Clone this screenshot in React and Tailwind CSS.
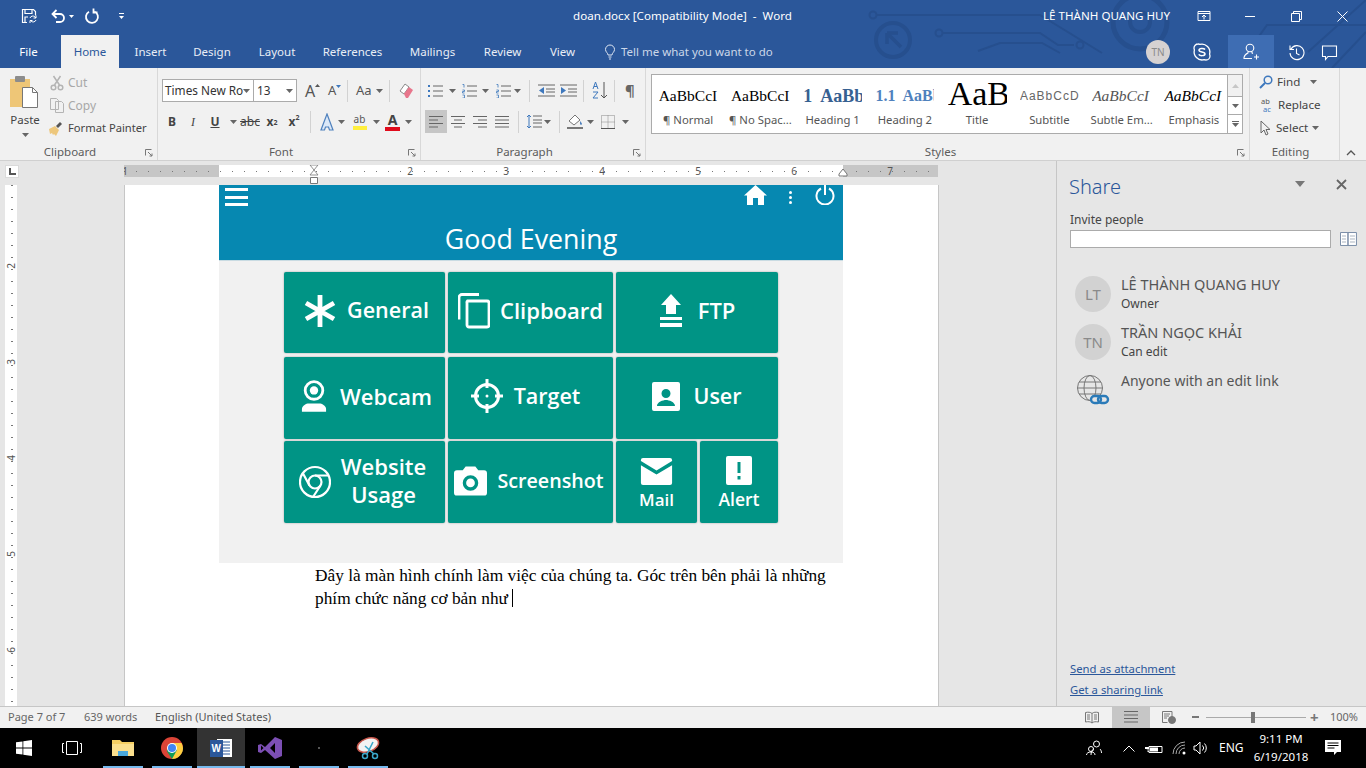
import React from 'react';

// ---- small helpers ----
function Dd({ className = '' }) {
  return (
    <svg width="7" height="4" viewBox="0 0 7 4" className={`shrink-0 ${className}`}>
      <path d="M0 0h7L3.500 4z" fill="#666" />
    </svg>
  );
}

function Sep({ className = '' }) {
  return <div className={`w-px h-[22px] bg-[#d2d2d2] shrink-0 ${className}`} />;
}

function Lines({ rows, stroke = '#666' }) {
  return (
    <svg width="14" height="14" viewBox="0 0 14 14">
      {rows.map((r, i) => (
        <path key={i} d={`M${r[0]} ${1.5 + i * 3.5}H${r[1]}`} stroke={stroke} strokeWidth="1" />
      ))}
    </svg>
  );
}

function Group({ label, className, labelClass = '', launcher = true, children }) {
  return (
    <div className={`flex flex-col h-full border-r border-[#d8d8d8] shrink-0 ${className}`}>
      <div className="h-[76px] shrink-0">{children}</div>
      <div className={`relative flex-1 text-center text-[11.500px] leading-[16px] text-[#5c5c5c] ${labelClass}`}>
        {label}
        {launcher && (
          <svg width="8" height="8" viewBox="0 0 8 8" className="absolute right-[4px] top-[5px]">
            <path d="M.5 .5h6M.5 .5v6M3 3l4 4M7 4.500V7H4.500" stroke="#777" fill="none" />
          </svg>
        )}
      </div>
    </div>
  );
}

// ---- title bar ----
function CircuitArt() {
  return (
    <svg width="506" height="68" viewBox="0 0 506 68" className="absolute right-0 top-0" fill="none" stroke="#264f8e" strokeWidth="2">
      <circle cx="13" cy="15" r="3.500" />
      <path d="M17 15H180l62 38" />
      <circle cx="33" cy="40" r="17" strokeWidth="4" />
      <path d="M27 33v11M27 33h11M28 34l13 13" strokeWidth="3.500" />
      <circle cx="79" cy="33" r="3.500" />
      <path d="M83 33H180l18 12h16" />
      <circle cx="220" cy="45" r="3.500" />
      <path d="M118 51l22-8h42l18 10" />
      <circle cx="280" cy="22" r="27" strokeWidth="5" />
      <circle cx="280" cy="22" r="10" strokeWidth="4" />
      <path d="M395 42l12-17H506M448 52L506 0M472 68l34-36" />
    </svg>
  );
}

function TitleBar() {
  return (
    <div className="flex items-center h-[36px] pb-[4px] relative text-white text-[11.600px]">
      <div className="flex items-center w-[573px] shrink-0 h-full relative">
        <div className="ml-[21px] shrink-0 flex">
          <svg width="16" height="16" viewBox="0 0 16 16" fill="none" stroke="#fff" strokeWidth="1.200">
            <path d="M6 14.500H1.500v-13h11l2 2v4M4 1.500v4h7v-4M4 14V9h3" />
            <path d="M9 10a3 3 0 0 1 5-1l1 1M15 12a3 3 0 0 1-5 1l-1-1M15 7.500V10h-2.500M9 15v-2.500h2.500" strokeWidth="1" />
          </svg>
        </div>
        <div className="ml-[13px] shrink-0 flex items-center gap-[3px]">
          <svg width="16" height="16" viewBox="0 0 16 16" fill="none" stroke="#fff" strokeWidth="1.800">
            <path d="M3 6h7a4 4 0 0 1 0 8H6M6.500 2l-4 4 4 4" />
          </svg>
          <svg width="5" height="3" viewBox="0 0 5 3"><path d="M0 0h5L2.500 3z" fill="#fff" /></svg>
        </div>
        <div className="ml-[10px] shrink-0 flex">
          <svg width="16" height="16" viewBox="0 0 16 16" fill="none" stroke="#fff" strokeWidth="1.800">
            <path d="M10.500 3.500a6 6 0 1 1-5.500.2M9.500 .5v4h4" />
          </svg>
        </div>
        <div className="ml-[19px] flex flex-col items-center gap-[2px]">
          <div className="w-[5px] h-px bg-white" />
          <svg width="5" height="3" viewBox="0 0 5 3"><path d="M0 0h5L2.500 3z" fill="#fff" /></svg>
        </div>
      </div>
      <div className="w-[470px] shrink-0 whitespace-pre relative">doan.docx [Compatibility Mode]  -  Word</div>
      <div className="w-[154px] shrink-0 whitespace-nowrap relative">LÊ THÀNH QUANG HUY</div>
      <div className="w-[48px] flex justify-start relative">
        <svg width="14" height="14" viewBox="0 0 14 14" fill="none" stroke="#fff">
          <path d="M1 2.500h12v9H1zM1 4.500h12M7 10.500v-4M5 8l2-2 2 2" />
        </svg>
      </div>
      <div className="w-[46px] flex relative"><div className="w-[10px] h-px bg-white" /></div>
      <div className="w-[46px] flex relative">
        <svg width="11" height="11" viewBox="0 0 11 11" fill="none" stroke="#fff">
          <path d="M.5 2.500h8v8h-8zM2.500 2.500v-2h8v8h-2" />
        </svg>
      </div>
      <div className="relative flex">
        <svg width="11" height="11" viewBox="0 0 11 11" stroke="#fff"><path d="M.5 .5l10 10M10.500 .5l-10 10" /></svg>
      </div>
    </div>
  );
}

function TabsRow() {
  const tabs = [
    ['Insert', 'w-[63px]'],
    ['Design', 'w-[60px]'],
    ['Layout', 'w-[70px]'],
    ['References', 'w-[81px]'],
    ['Mailings', 'w-[79px]'],
    ['Review', 'w-[61px]'],
    ['View', 'w-[59px]'],
  ];
  return (
    <div className="flex items-center h-[32px] relative text-white text-[11.500px]">
      <div className="w-[61px] text-center pr-[4px]">File</div>
      <div className="w-[58px] h-[33px] -mt-px bg-[#f1f1f1] text-[#2b579a] flex items-center justify-center">Home</div>
      {tabs.map(([t, w]) => (
        <div key={t} className={`${w} text-center text-[#e9eef6]`}>{t}</div>
      ))}
      <svg width="12" height="16" viewBox="0 0 12 16" fill="none" stroke="#dfe7f3" className="ml-[12px] shrink-0">
        <path d="M4 11c0-2-2.500-3-2.500-5.500a4.500 4.500 0 0 1 9 0C10.500 8 8 9 8 11zM4.500 13h3M5 15h2" />
      </svg>
      <div className="ml-[5px] text-[#cbd7e9] w-[525px] shrink-0 whitespace-nowrap">Tell me what you want to do</div>
      <div className="w-[24px] h-[24px] rounded-full bg-[#d6d2d2] text-[#8a8a8a] text-[10px] flex items-center justify-center shrink-0">TN</div>
      <div className="ml-[22px] w-[36px] shrink-0 flex">
        <svg width="20" height="20" viewBox="0 0 20 20" fill="none" stroke="#fff" strokeWidth="1.300">
          <path d="M6 2a4 4 0 0 0-4 4c0 .7.2 1.300.4 1.900a8 8 0 0 0 9.700 9.800c.6.200 1.200.3 1.900.3a4 4 0 0 0 4-4c0-.7-.2-1.300-.4-1.900A8 8 0 0 0 7.900 2.400 4 4 0 0 0 6 2z" />
          <path d="M13 7.500C12 6 7 6 7 8.200 7 10.500 13 9.500 13 12c0 2-5 2.200-6.300.4" strokeWidth="1.500" />
        </svg>
      </div>
      <div className="w-[46px] h-[33px] -mt-px bg-[#3e6db3] flex items-center justify-center shrink-0">
        <svg width="18" height="18" viewBox="0 0 18 18" fill="none" stroke="#fff" strokeWidth="1.100">
          <circle cx="8" cy="5" r="3.800" />
          <path d="M6 8.500v1.500c-2 .8-3.500 2-4 4.500v1h8M10 8.500V10l1 .5M12 14h5M14.500 11.500v5" />
        </svg>
      </div>
      <div className="ml-[14px] w-[33px] shrink-0 flex">
        <svg width="17" height="17" viewBox="0 0 17 17" fill="none" stroke="#fff" strokeWidth="1.100">
          <path d="M3 5a7 7 0 1 1-1 4M2 1.500v4h4M8.500 4.500v5l3 1.500" />
        </svg>
      </div>
      <div className="shrink-0 flex">
        <svg width="17" height="17" viewBox="0 0 17 17" fill="none" stroke="#fff" strokeWidth="1.100">
          <path d="M1.500 2h14v10.500H7l-2.500 3v-3h-3z" />
        </svg>
      </div>
    </div>
  );
}

// ---- ribbon ----
function ClipboardGroup() {
  return (
    <Group label="Clipboard" className="w-[158px]" labelClass="pr-[17px]">
      <div className="flex h-full">
        <div className="w-[50px] flex flex-col items-center pt-[7px] text-[11.500px] text-[#444] shrink-0">
          <svg width="32" height="36" viewBox="0 0 32 36">
            <rect x="1" y="4" width="20" height="28" fill="#eec677" />
            <rect x="6" y="1" width="10" height="6" rx="1" fill="#8c8c8c" />
            <path d="M13.500 12.500h10l5 5v15h-15z" fill="#fff" stroke="#777" />
            <path d="M23.500 12.500v5h5" fill="none" stroke="#777" />
          </svg>
          <div className="mt-[1px] leading-[16px]">Paste</div>
          <Dd className="mt-[5px]" />
        </div>
        <div className="flex flex-col pt-[3px] text-[12px] text-[#444]">
          <div className="flex items-center h-[23px] gap-[4px] text-[#a8a8a8]">
            <svg width="14" height="16" viewBox="0 0 14 16" fill="none" stroke="#b4b4b4" strokeWidth="1.500">
              <path d="M3.500 1l6 9M10.500 1l-6 9" />
              <circle cx="3.500" cy="12.500" r="2.300" />
              <circle cx="10.500" cy="12.500" r="2.300" />
            </svg>
            Cut
          </div>
          <div className="flex items-center h-[23px] gap-[4px] text-[#a8a8a8]">
            <svg width="14" height="15" viewBox="0 0 14 15" fill="none" stroke="#b4b4b4">
              <path d="M.5 .5h6l2 2v9h-8zM5.500 3.500h6l2 2v9h-8z" />
            </svg>
            Copy
          </div>
          <div className="flex items-center h-[23px] gap-[5px] -ml-[2px] whitespace-nowrap text-[11.200px]">
            <svg width="15" height="15" viewBox="0 0 15 15">
              <path d="M1 8l6-3 4 4-3 6-2-2-1 1-1-2-2 1z" fill="#edc77c" />
              <path d="M8 5l4-4 2 2-4 4z" fill="#555" />
            </svg>
            Format Painter
          </div>
        </div>
      </div>
    </Group>
  );
}

function FontGroup() {
  const letter = 'flex items-center justify-center text-[#444] text-[12px] shrink-0';
  return (
    <Group label="Font" className="w-[263px]" labelClass="pr-[16px]">
      <div className="flex flex-col pl-[4px] pt-[11px]">
        <div className="flex items-center h-[23px]">
          <div className="w-[92px] h-[23px] shrink-0 bg-white border border-[#ababab] flex items-center justify-between pl-[2px] pr-[4px] text-[11.800px] text-[#333]">
            <span className="whitespace-nowrap">Times New Ro</span>
            <Dd />
          </div>
          <div className="w-[43px] h-[23px] shrink-0 bg-white border border-l-0 border-[#ababab] flex items-center justify-between pl-[3px] pr-[3px] text-[11.800px] text-[#333]">
            13
            <Dd />
          </div>
          <div className="w-[21px] shrink-0 ml-[8px] flex items-start text-[16px] text-[#555] leading-none">
            A
            <svg width="5" height="3" viewBox="0 0 5 3" className="mt-[1px]"><path d="M2.500 0L5 3H0z" fill="#555" /></svg>
          </div>
          <div className="w-[17px] shrink-0 ml-[2px] flex items-start text-[13px] text-[#555] leading-none">
            A
            <svg width="5" height="3" viewBox="0 0 5 3" className="mt-[1px]"><path d="M0 0h5L2.500 3z" fill="#3e78bd" /></svg>
          </div>
          <Sep className="ml-[2px]" />
          <div className="w-[33px] shrink-0 ml-[8px] flex items-center gap-[4px] text-[13px] text-[#555]">Aa<Dd /></div>
          <Sep />
          <div className="ml-[7px]">
            <svg width="18" height="18" viewBox="0 0 18 18">
              <path d="M3 9l5-7 4 3-5 7z" fill="#fff" stroke="#8a8a8a" />
              <path d="M7 12l5-7 4 3-5 8H9z" fill="#e8768c" />
            </svg>
          </div>
        </div>
        <div className="flex items-center h-[23px] mt-[8px]">
          <div className={`${letter} w-[20px] font-bold`}>B</div>
          <div className={`${letter} w-[22px] italic font-['Liberation_Serif',serif]`}>I</div>
          <div className={`${letter} w-[22px] underline font-bold`}>U</div>
          <Dd className="ml-[4px]" />
          <div className={`${letter} w-[24px] ml-[1px] text-[11px] line-through`}>abc</div>
          <div className={`${letter} w-[20px] font-bold`}>x<sub className="text-[7px]">2</sub></div>
          <div className={`${letter} w-[24px] font-bold`}>x<sup className="text-[7px]">2</sup></div>
          <Sep className="ml-[4px]" />
          <div className="ml-[9px] flex shrink-0">
            <svg width="14" height="18" viewBox="0 0 14 18">
              <path d="M7 1l6 16h-3.500l-1-3h-3l-1 3H1z" fill="#dbe8f8" stroke="#4f81bd" strokeWidth="1.200" />
            </svg>
          </div>
          <Dd className="ml-[4px]" />
          <div className="ml-[6px] w-[17px] h-[20px] shrink-0 flex flex-col items-center">
            <div className="text-[10px] leading-[14px] text-[#555]">ab</div>
            <div className="w-[14px] h-[4px] bg-[#ffef3e]" />
          </div>
          <Dd className="ml-[5px]" />
          <div className="ml-[5px] w-[15px] shrink-0 flex flex-col items-center font-bold text-[14px] leading-[14px] text-[#444]">
            A
            <div className="w-[15px] h-[4px] bg-[#e00b1c]" />
          </div>
          <Dd className="ml-[5px]" />
        </div>
      </div>
    </Group>
  );
}

function ParagraphGroup() {
  const bullets = (
    <svg width="15" height="14" viewBox="0 0 15 14" className="shrink-0">
      <path d="M5 2h10M5 7h10M5 12h10" stroke="#666" />
      <path d="M0 1h2v2H0zM0 6h2v2H0zM0 11h2v2H0z" fill="#3e78bd" />
    </svg>
  );
  const numbers = (
    <svg width="15" height="14" viewBox="0 0 15 14" className="shrink-0">
      <path d="M5 2h10M5 7h10M5 12h10" stroke="#666" />
      <path d="M.5 .5H2v3M.5 6h2v1.500h-2V9h2M.5 11h2v3h-2" stroke="#3e78bd" fill="none" strokeWidth=".8" />
    </svg>
  );
  return (
    <Group label="Paragraph" className="w-[225px]" labelClass="pr-[17px]">
      <div className="flex flex-col pt-[11px] pl-[3px]">
        <div className="flex items-center h-[23px] pl-[4px]">
          {bullets}
          <Dd className="ml-[6px]" />
          <div className="ml-[6px] flex">{numbers}</div>
          <Dd className="ml-[5px]" />
          <div className="ml-[7px] flex">{numbers}</div>
          <Dd className="ml-[3px]" />
          <Sep className="ml-[8px]" />
          <div className="ml-[8px] flex gap-[5px]">
            <svg width="17" height="13" viewBox="0 0 17 13"><path d="M0 1h17M8 5h9M8 8h9M0 12h17" stroke="#666" /><path d="M6 3v7L1 6.500z" fill="#3e78bd" /></svg>
            <svg width="17" height="13" viewBox="0 0 17 13"><path d="M0 1h17M8 5h9M8 8h9M0 12h17" stroke="#666" /><path d="M1 3v7l5-3.500z" fill="#3e78bd" /></svg>
          </div>
          <Sep className="ml-[6px]" />
          <div className="ml-[8px] flex">
            <svg width="16" height="19" viewBox="0 0 16 19">
              <path d="M1 8l2.500-7L6 8M2 5.500h3M1 11h5l-5 6h5" stroke="#3e78bd" fill="none" />
              <path d="M12 1v16M9 14l3 3 3-3" stroke="#555" fill="none" />
            </svg>
          </div>
          <Sep className="ml-[6px]" />
          <div className="ml-[10px] text-[15px] text-[#666] font-bold leading-none">¶</div>
        </div>
        <div className="flex items-center h-[23px] mt-[8px] pl-[1px]">
          <div className="w-[22px] h-[23px] bg-[#c6c6c6] flex items-center justify-center shrink-0">
            <Lines rows={[[0, 14], [0, 9], [0, 14], [0, 9]]} />
          </div>
          <div className="w-[22px] flex justify-center shrink-0"><Lines rows={[[0, 14], [3, 11], [0, 14], [3, 11]]} /></div>
          <div className="w-[22px] flex justify-center shrink-0"><Lines rows={[[0, 14], [5, 14], [0, 14], [5, 14]]} /></div>
          <div className="w-[22px] flex justify-center shrink-0"><Lines rows={[[0, 14], [0, 14], [0, 14], [0, 14]]} /></div>
          <Sep className="ml-[5px]" />
          <div className="ml-[7px] flex">
            <svg width="16" height="15" viewBox="0 0 16 15"><path d="M7 2h9M7 6h9M7 9h9M7 13h9" stroke="#666" /><path d="M3 1v13M1 3l2-2 2 2M1 12l2 2 2-2" stroke="#3e78bd" fill="none" /></svg>
          </div>
          <Dd className="ml-[2px]" />
          <Sep className="ml-[8px]" />
          <div className="ml-[6px] flex">
            <svg width="18" height="17" viewBox="0 0 18 17"><path d="M3 8l6-6 5 5-6 5z" fill="#fff" stroke="#777" /><path d="M14 8s2 2 2 3-2 1-2 0 0-3 0-3z" fill="#4f81bd" /><path d="M1 15h16" stroke="#777" strokeWidth="2" /></svg>
          </div>
          <Dd className="ml-[3px]" />
          <div className="ml-[7px] flex">
            <svg width="14" height="14" viewBox="0 0 14 14"><path d="M.5 .5h13v13H.500zM7 .5v13M.5 7h13" stroke="#888" strokeDasharray="1 1" fill="none" /><path d="M0 13.500h14" stroke="#555" /></svg>
          </div>
          <Dd className="ml-[7px]" />
        </div>
      </div>
    </Group>
  );
}

function StyleItem({ preview, previewClass, label }) {
  return (
    <div className="w-[72.250px] shrink-0 flex flex-col items-center overflow-hidden">
      <div className={`h-[34px] w-[59px] overflow-hidden flex items-center whitespace-pre ${previewClass}`}>{preview}</div>
      <div className="text-[11.300px] leading-[16px] -mt-px text-[#555] whitespace-nowrap">{label}</div>
    </div>
  );
}

function StylesGroup() {
  return (
    <Group label="Styles" className="w-[604px]" labelClass="pr-[14px]">
      <div className="pl-[5px] pt-[6px] pr-[6px]">
        <div className="h-[60px] bg-white border border-[#ababab] flex">
          <div className="flex flex-1 pt-[4px] overflow-hidden">
            <StyleItem preview="AaBbCcI" previewClass="font-['Liberation_Serif',serif] text-[15.500px] text-black" label="¶ Normal" />
            <StyleItem preview="AaBbCcI" previewClass="font-['Liberation_Serif',serif] text-[15.500px] text-black" label="¶ No Spac..." />
            <StyleItem preview="1  AaBb" previewClass="font-['Liberation_Serif',serif] font-bold text-[18px] text-[#366091]" label="Heading 1" />
            <StyleItem preview="1.1  AaBb" previewClass="font-['Liberation_Serif',serif] font-bold text-[16px] text-[#4f81bd]" label="Heading 2" />
            <StyleItem preview="AaB" previewClass="font-['Liberation_Serif',serif] text-[34px] leading-[30px] pb-[4px] text-black" label="Title" />
            <StyleItem preview="AaBbCcD" previewClass="font-['Liberation_Sans',sans-serif] text-[12px] tracking-[1px] text-[#666]" label="Subtitle" />
            <StyleItem preview="AaBbCcI" previewClass="font-['Liberation_Serif',serif] italic text-[15.500px] text-[#555]" label="Subtle Em..." />
            <StyleItem preview="AaBbCcI" previewClass="font-['Liberation_Serif',serif] italic text-[15.500px] text-black" label="Emphasis" />
          </div>
          <div className="w-[15px] shrink-0 border-l border-[#ababab] flex flex-col">
            <div className="h-[21px] bg-[#f1f1f1] flex items-center justify-center"><svg width="7" height="4" viewBox="0 0 7 4"><path d="M3.500 0L7 4H0z" fill="#c6c6c6" /></svg></div>
            <div className="h-[19px] border-y border-[#ababab] flex items-center justify-center"><Dd /></div>
            <div className="flex-1 flex flex-col items-center justify-center gap-[1px]"><div className="w-[7px] h-px bg-[#666]" /><Dd /></div>
          </div>
        </div>
      </div>
    </Group>
  );
}

function EditingGroup() {
  return (
    <Group label="Editing" launcher={false} className="w-[90px]" labelClass="pr-[8px]">
      <div className="flex flex-col pt-[2px] pl-[9px] text-[11.600px] text-[#444]">
        <div className="flex items-center h-[23px] gap-[4px]">
          <svg width="14" height="14" viewBox="0 0 14 14" fill="none" stroke="#3e78bd" strokeWidth="1.500"><circle cx="9" cy="5" r="3.800" /><path d="M6 8l-5 5" strokeWidth="2" /></svg>
          Find
          <Dd className="ml-[6px]" />
        </div>
        <div className="flex items-center h-[23px] gap-[3px]">
          <svg width="16" height="16" viewBox="0 0 16 16">
            <text x="2" y="7" fontSize="7.500" fill="#555">ab</text>
            <text x="4" y="15" fontSize="7.500" fill="#3e78bd">ac</text>
          </svg>
          Replace
        </div>
        <div className="flex items-center h-[23px] gap-[5px] pl-[1px]">
          <svg width="11" height="16" viewBox="0 0 11 16" fill="none" stroke="#666"><path d="M1 1v12l3-3 2 5 2-1-2-4.500h4z" /></svg>
          Select
          <Dd className="-ml-[1px]" />
        </div>
      </div>
    </Group>
  );
}

function Ribbon() {
  return (
    <div className="h-[93px] bg-[#f1f1f1] border-b border-[#d0d0d0] flex items-stretch shrink-0">
      <ClipboardGroup />
      <FontGroup />
      <ParagraphGroup />
      <StylesGroup />
      <EditingGroup />
      <div className="flex-1 relative">
        <svg width="10" height="6" viewBox="0 0 10 6" fill="none" stroke="#555" strokeWidth="1.300" className="absolute left-[6px] bottom-[4px]"><path d="M1 5l4-4 4 4" /></svg>
      </div>
    </div>
  );
}

// ---- rulers ----
function HorizontalRuler() {
  const marks = [];
  for (let x = 0; x <= 814; x += 12) {
    const rel = x + 124 - 314;
    const mod = ((rel % 96) + 96) % 96;
    if (mod === 0) continue;
    marks.push(
      mod === 48
        ? <path key={x} d={`M${x + .5} 4v4`} stroke="#888" />
        : <path key={x} d={`M${x + .5} 6v1`} stroke="#777" />
    );
  }
  const nums = [[1, 1], [286, 2], [382, 3], [478, 4], [574, 5], [670, 6], [766, 7]];
  return (
    <svg width="814" height="22" viewBox="0 0 814 22" className="block">
      <rect x="0" y="0" width="814" height="12" fill="#fff" />
      <rect x="0" y="0" width="95" height="12" fill="#c6c6c6" />
      <rect x="719" y="0" width="95" height="12" fill="#c6c6c6" />
      {marks}
      {nums.map(([x, n]) => (
        <text key={n} x={x} y="10" fontSize="10" fill="#555" textAnchor="middle" fontFamily="Noto Sans, sans-serif">{n}</text>
      ))}
      <path d="M186 0h8l-4 5 4 5h-8l4-5z" fill="#fff" stroke="#777" strokeWidth=".8" />
      <path d="M186.500 12.500h7v6h-7z" fill="#fff" stroke="#777" />
      <path d="M715 9l4-5 4 5v2h-8z" fill="#fff" stroke="#777" />
    </svg>
  );
}

function VerticalRuler() {
  const marks = [];
  for (let y = 0; y < 521; y += 12) {
    const rel = y - 9;
    const mod = ((rel % 96) + 96) % 96;
    if (mod === 0) continue;
    marks.push(
      mod === 48
        ? <path key={y} d={`M4 ${y + .5}h4`} stroke="#666" />
        : <path key={y} d={`M6 ${y + .5}h2`} stroke="#777" />
    );
  }
  return (
    <svg width="12" height="521" viewBox="0 0 12 521" className="block">
      <rect width="12" height="521" fill="#fff" />
      {marks}
      {[2, 3, 4, 5, 6].map((n, i) => (
        <text key={n} fontSize="10" fill="#555" textAnchor="middle" fontFamily="Noto Sans, sans-serif" transform={`translate(10 ${81 + i * 96}) rotate(-90)`}>{n}</text>
      ))}
    </svg>
  );
}

// ---- app screenshot inside the document ----
function Tile({ className, children }) {
  return (
    <div className={`h-full bg-[#009485] rounded-[2px] shadow-[0_0_2px_rgba(0,0,0,0.35)] flex items-center justify-center text-white font-semibold shrink-0 ${className}`}>
      {children}
    </div>
  );
}

function PhoneApp() {
  return (
    <div className="w-[624px] h-[378px] bg-[#f1f1f1] font-['Open_Sans',sans-serif] shrink-0">
      <div className="h-[76px] bg-[#0688b1] border-b border-[#c9dbe2] text-white flex flex-col">
        <div className="h-[26px] flex items-start pl-[6px]">
          <div className="w-[23px] flex flex-col gap-[4.500px] pt-[3px]">
            <div className="h-[3px] bg-white" />
            <div className="h-[3px] bg-white" />
            <div className="h-[3px] bg-white" />
          </div>
          <div className="ml-[496px] flex">
            <svg width="23" height="20" viewBox="0 0 23 20" fill="#fff"><path d="M11.500 0L23 10.500h-3V20h-6v-7H9v7H3v-9.500H0z" /></svg>
          </div>
          <div className="ml-[22px] w-[4px] flex flex-col gap-[2px] pt-[6px]">
            <div className="w-[3px] h-[3px] rounded-full bg-white" />
            <div className="w-[3px] h-[3px] rounded-full bg-white" />
            <div className="w-[3px] h-[3px] rounded-full bg-white" />
          </div>
          <div className="ml-[22px] flex">
            <svg width="20" height="20" viewBox="0 0 20 20" fill="none" stroke="#fff" strokeWidth="2"><path d="M6 3.500a8.500 8.500 0 1 0 8 0M10 0v10" /></svg>
          </div>
        </div>
        <div className="text-[26.800px] leading-[36px] text-center mt-[10px]">Good Evening</div>
      </div>
      <div className="pl-[65px] pt-[11px] flex flex-col">
        <div className="flex h-[81px] gap-[3px]">
          <Tile className="w-[161px] gap-[11px] text-[21.500px] pb-[4px] pl-[4px]">
            <svg width="32" height="32" viewBox="0 0 32 32" stroke="#fff" strokeWidth="4.800"><path d="M16 0v32M2 8l28 16M30 8L2 24" /></svg>
            General
          </Tile>
          <Tile className="w-[165px] gap-[10px] text-[22px] pb-[4px]">
            <svg width="32" height="36" viewBox="0 0 32 36" fill="none" stroke="#fff" strokeWidth="2.800"><path d="M21 1.500H4a3 3 0 0 0-3 3v22M9.500 8H29a2 2 0 0 1 2 2v22a2 2 0 0 1-2 2H11a2 2 0 0 1-2-2V10a2 2 0 0 1 .500-2z" /></svg>
            Clipboard
          </Tile>
          <Tile className="w-[162px] gap-[15px] text-[22px] pb-[4px]">
            <svg width="24" height="34" viewBox="0 0 24 34" fill="#fff"><path d="M12 0l10 11h-5v9H7v-9H2zM1 23h22v3H1zM1 29h22v4H1z" /></svg>
            FTP
          </Tile>
        </div>
        <div className="flex h-[82px] gap-[3px] mt-[4px]">
          <Tile className="w-[161px] gap-[13px] text-[22px] pb-[4px] pl-[4px]">
            <svg width="26" height="34" viewBox="0 0 28 34" fill="none" stroke="#fff"><circle cx="14" cy="11" r="9.500" strokeWidth="3" /><circle cx="14" cy="11" r="4.500" fill="#fff" stroke="none" /><path d="M1 34v-3c0-4 5-6 7-6h12c2 0 7 2 7 6v3z" fill="#fff" stroke="none" /></svg>
            Webcam
          </Tile>
          <Tile className="w-[165px] gap-[11px] text-[21.500px] pb-[4px] pr-[10px]">
            <svg width="32" height="34" viewBox="0 0 32 34" fill="none" stroke="#fff" strokeWidth="3"><circle cx="16" cy="17" r="11.500" /><path d="M16 0v9M16 25v9M0 17h8M24 17h8" /><circle cx="16" cy="17" r="1.500" fill="#fff" stroke="none" /></svg>
            Target
          </Tile>
          <Tile className="w-[162px] gap-[13px] text-[21.500px] pb-[4px]">
            <svg width="28" height="29" viewBox="0 0 28 29" fill="#fff"><path fillRule="evenodd" d="M2 0h24a2 2 0 0 1 2 2v25a2 2 0 0 1-2 2H2a2 2 0 0 1-2-2V2a2 2 0 0 1 2-2zm12 7a4.500 4.500 0 1 0 0 9 4.500 4.500 0 0 0 0-9zM5 24h18c0-4-6-6-9-6s-9 2-9 6z" /></svg>
            User
          </Tile>
        </div>
        <div className="flex h-[82px] gap-[3px] mt-[2px]">
          <Tile className="w-[161px] gap-[10px] text-[22px] leading-[28px] pb-[4px] pr-[4px]">
            <svg width="32" height="34" viewBox="0 0 32 32" fill="none" stroke="#fff" strokeWidth="2.200" className="mt-[4px]">
              <circle cx="16" cy="16" r="15" />
              <circle cx="16" cy="16" r="6.500" />
              <path d="M16 9.500h14M10.500 19.500L4 7.500M21.500 19.500L14 31" />
            </svg>
            <div className="text-center">Website<br />Usage</div>
          </Tile>
          <Tile className="w-[165px] gap-[10px] text-[19.700px] pb-[2px] pr-[3px]">
            <svg width="33" height="30" viewBox="0 0 34 30" fill="#fff"><path fillRule="evenodd" d="M3 4h6l3-4h10l3 4h6a3 3 0 0 1 3 3v20a3 3 0 0 1-3 3H3a3 3 0 0 1-3-3V7a3 3 0 0 1 3-3zm14 5a8 8 0 1 0 0 16 8 8 0 0 0 0-16zm0 3.500a4.500 4.500 0 1 1 0 9 4.500 4.500 0 0 1 0-9z" /></svg>
            Screenshot
          </Tile>
          <div className="flex gap-[3px] h-full">
            <Tile className="w-[81px] flex-col text-[17px] leading-[24px] gap-[3px] pt-[5px]">
              <svg width="33" height="27" viewBox="0 0 30 26" fill="#fff"><path d="M2 0h26a2 2 0 0 1 2 2v1L15 12 0 3V2a2 2 0 0 1 2-2zM0 7l15 9 15-9v17a2 2 0 0 1-2 2H2a2 2 0 0 1-2-2z" /></svg>
              Mail
            </Tile>
            <Tile className="w-[78px] flex-col text-[17.500px] leading-[24px] gap-[2px] pt-[3px]">
              <svg width="28" height="29" viewBox="0 0 26 29" fill="#fff"><path fillRule="evenodd" d="M2 0h22a2 2 0 0 1 2 2v25a2 2 0 0 1-2 2H2a2 2 0 0 1-2-2V2a2 2 0 0 1 2-2zm9.500 6v11h3V6zm0 14v3.500h3V20z" /></svg>
              Alert
            </Tile>
          </div>
        </div>
      </div>
    </div>
  );
}

function DocumentArea() {
  return (
    <div className="flex-1 flex flex-col min-w-0">
      <div className="h-[24px] flex items-start pt-[4px] shrink-0">
        <div className="ml-[5px] w-[14px] h-[13px] bg-white border border-[#dadada] flex items-center justify-center">
          <svg width="7" height="7" viewBox="0 0 7 7"><path d="M1 0v6h6" fill="none" stroke="#555" strokeWidth="2" /></svg>
        </div>
        <div className="ml-[105px]"><HorizontalRuler /></div>
      </div>
      <div className="flex-1 flex items-start min-h-0 overflow-hidden">
        <div className="ml-[5px] w-[12px]"><VerticalRuler /></div>
        <div className="ml-[107px] w-[815px] h-full bg-white border-x border-[#c6c6c6] shrink-0 pl-[94px]">
          <PhoneApp />
          <div className="w-[528px] ml-[96px] mt-[1px] font-['Liberation_Serif',serif] text-[17.330px] leading-[23px] text-black">
            Đây là màn hình chính làm việc của chúng ta. Góc trên bên phải là những phím chức năng cơ bản như <span className="inline-block w-px h-[18px] bg-black align-[-3px]" />
          </div>
        </div>
      </div>
    </div>
  );
}

// ---- share pane ----
function Person({ initials, name, role, className = '' }) {
  return (
    <div className={`flex ${className}`}>
      <div className="w-[36px] h-[36px] rounded-full bg-[#d2d2d2] text-[#8a8a8a] text-[15px] flex items-center justify-center ml-[5px] shrink-0">{initials}</div>
      <div className="ml-[10px] -mt-[2px]">
        <div className="text-[14.500px] leading-[20px] text-[#555] whitespace-nowrap">{name}</div>
        <div className="text-[12px] leading-[16px] mt-[2px] text-[#444]">{role}</div>
      </div>
    </div>
  );
}

function SharePane() {
  return (
    <div className="w-[310px] shrink-0 border-l border-[#c6c6c6] flex flex-col pl-[13px] pr-[9px] relative">
      <div className="flex items-center h-[27px] mt-[12px]">
        <div className="text-[20px] leading-[27px] text-[#2b579a] font-light w-[225px] -ml-px">Share</div>
        <svg width="10" height="6" viewBox="0 0 10 6" className="-mt-[6px] ml-px"><path d="M0 0h10L5 6z" fill="#777" /></svg>
        <svg width="11" height="11" viewBox="0 0 11 11" stroke="#666" strokeWidth="1.800" className="ml-[31px] -mt-[5px]"><path d="M1 1l9 9M10 1l-9 9" /></svg>
      </div>
      <div className="text-[12px] leading-[16px] text-[#444] mt-[12px]">Invite people</div>
      <div className="flex items-center mt-[2px]">
        <div className="w-[262px] h-[18px] bg-white border border-[#ababab]" />
        <svg width="17" height="14" viewBox="0 0 17 14" fill="#fff" stroke="#7a8ea8" className="ml-[9px]">
          <path d="M.5 .5H8v13H.500zM8 .5h8.500v13H8z" />
          <path d="M2 4h4M2 7h4M2 10h4M10 4h5M10 7h5M10 10h5" stroke="#aab4c0" />
        </svg>
      </div>
      <Person className="mt-[28px]" initials="LT" name="LÊ THÀNH QUANG HUY" role="Owner" />
      <Person className="mt-[12px]" initials="TN" name="TRẦN NGỌC KHẢI" role="Can edit" />
      <div className="flex mt-[10px]">
        <svg width="34" height="32" viewBox="0 0 34 32" fill="none" stroke="#777" className="ml-[6px] mt-[4px] shrink-0">
          <circle cx="14" cy="14" r="12.500" />
          <ellipse cx="14" cy="14" rx="6" ry="12.500" />
          <path d="M1.500 14h25M3 8h22M3 20h22" />
          <rect x="15" y="22" width="10" height="7" rx="3.500" stroke="#2a7ab8" strokeWidth="2.400" fill="#e6e6e6" />
          <rect x="22" y="22" width="10" height="7" rx="3.500" stroke="#2a7ab8" strokeWidth="2.400" />
        </svg>
        <div className="ml-[11px] mt-px text-[14px] leading-[20px] text-[#555] whitespace-nowrap">Anyone with an edit link</div>
      </div>
      <div className="mt-auto pb-[6px] text-[11.300px] leading-[21px] text-[#2b579a] underline">
        <div>Send as attachment</div>
        <div>Get a sharing link</div>
      </div>
    </div>
  );
}

// ---- status & task bar ----
function StatusBar() {
  return (
    <div className="h-[22px] bg-[#f1f1f1] border-t border-[#c6c6c6] flex items-center text-[11px] text-[#666] shrink-0 pb-[1px]">
      <div className="ml-[8px] w-[76px] whitespace-nowrap">Page 7 of 7</div>
      <div className="w-[71px] whitespace-nowrap">639 words</div>
      <div className="whitespace-nowrap text-[#555] w-[930px]">English (United States)</div>
      <div className="w-[27px] flex">
        <svg width="14" height="13" viewBox="0 0 14 13" fill="none" stroke="#777"><path d="M7 2.500C5.500 1 3 1 .5 1.500V11C3 10.500 5.500 10.500 7 12c1.500-1.500 4-1.500 6.500-1V1.500C11 1 8.500 1 7 2.500zM7 2.500V12M2 4h3M2 6h3M2 8h3M9 4h3M9 6h3M9 8h3" /></svg>
      </div>
      <div className="w-[38px] h-[21px] bg-[#c6c6c6] flex items-center justify-center">
        <Lines rows={[[0, 14], [0, 14], [0, 14], [0, 14]]} />
      </div>
      <div className="w-[38px] flex justify-center">
        <svg width="14" height="13" viewBox="0 0 14 13" fill="none" stroke="#777"><path d="M.5 .5H10v6M.5 .5v11h5M2 3h6M2 5h5M2 7h3" /><circle cx="10" cy="9" r="3.500" fill="#777" /></svg>
      </div>
      <div className="flex items-center ml-[4px]">
        <div className="w-[7px] h-[2px] bg-[#777]" />
        <div className="w-[100px] ml-[7px] h-px bg-[#aaa] relative">
          <div className="absolute left-[45px] -top-[5px] w-[4px] h-[11px] bg-[#777]" />
        </div>
        <div className="ml-[4px] text-[15px] font-bold leading-none text-[#777]">+</div>
      </div>
      <div className="ml-auto mr-[8px]">100%</div>
    </div>
  );
}

function TaskIcon({ className = '', active = false, children }) {
  return (
    <div className={`relative h-full flex items-center justify-center shrink-0 ${active ? 'bg-[#333]' : ''} ${className}`}>
      {children}
      <div className="absolute bottom-0 inset-x-0 h-[2px] bg-[#76b9ed]" />
    </div>
  );
}

function Taskbar() {
  return (
    <div className="h-[40px] bg-black flex items-center text-white shrink-0">
      <div className="w-[47px] flex justify-center">
        <svg width="16" height="16" viewBox="0 0 16 16" fill="#fff"><path d="M0 2.300l6.500-.9v6.200H0zM7.300 1.300L16 0v7.600H7.300zM0 8.400h6.500v6.200L0 13.700zM7.300 8.400H16V16l-8.700-1.200z" /></svg>
      </div>
      <div className="w-[50px] flex justify-center">
        <svg width="20" height="14" viewBox="0 0 20 14" fill="none" stroke="#fff"><path d="M4.500 .5h11v13h-11zM2 2.500H.5v9H2M18 2.500h1.500v9H18" /></svg>
      </div>
      <div className="flex h-full ml-[6px] gap-[9px]">
        <TaskIcon className="w-[40px]">
          <svg width="22" height="18" viewBox="0 0 22 18"><path d="M0 1h8l2 2h12v14H0z" fill="#f5cf63" /><path d="M0 5h22v12H0z" fill="#fbe08e" /><path d="M6 12h10v5H6z" fill="#4aa8dc" /></svg>
        </TaskIcon>
        <TaskIcon className="w-[40px]">
          <svg width="22" height="22" viewBox="0 0 22 22">
            <circle cx="11" cy="11" r="11" fill="#db4437" />
            <path d="M1.500 5.500L7 16l4 6a11 11 0 0 0 10.800-12H11A5 5 0 0 0 6 14z" fill="#0f9d58" />
            <path d="M11 6h9.500A11 11 0 0 1 22 11 11 11 0 0 1 11 22l5-9z" fill="#ffcd40" />
            <circle cx="11" cy="11" r="5" fill="#fff" />
            <circle cx="11" cy="11" r="4" fill="#4285f4" />
          </svg>
        </TaskIcon>
      </div>
      <TaskIcon active className="w-[48px] ml-[5px]">
        <svg width="22" height="22" viewBox="0 0 22 22">
          <path d="M7 2h15v18H7z" fill="#fff" />
          <path d="M13 5h7M13 8h7M13 11h7M13 14h7M13 17h7" stroke="#2b579a" />
          <path d="M0 3h13v17H0z" fill="#2b579a" />
          <text x="1.500" y="15" fontSize="10" fontWeight="bold" fill="#fff" fontFamily="Liberation Sans, sans-serif">W</text>
        </svg>
      </TaskIcon>
      <div className="flex h-full ml-[5px] gap-[9px]">
        <TaskIcon className="w-[40px]">
          <svg width="24" height="24" viewBox="0 0 24 24">
            <path d="M17 1l7 3v16l-7 3-10-9-4 3-3-1V9l3-1 4 3zM17 7l-5 5 5 5z" fill="#7c4fb4" fillRule="evenodd" />
            <path d="M3 9.500v5L5.500 12z" fill="#000" />
          </svg>
        </TaskIcon>
        <TaskIcon className="w-[40px]">
          <div className="w-[2px] h-[2px] bg-[#555]" />
        </TaskIcon>
        <TaskIcon className="w-[40px]">
          <svg width="26" height="24" viewBox="0 0 26 24" fill="none">
            <ellipse cx="13" cy="9" rx="11" ry="6.500" transform="rotate(-20 13 9)" fill="#f3f3f3" stroke="#c9584d" strokeWidth="1.500" />
            <path d="M10 10l9 8M18 6l-6 12" stroke="#3aa6c9" strokeWidth="1.600" />
            <circle cx="10" cy="20" r="2.500" stroke="#3aa6c9" strokeWidth="1.500" />
            <circle cx="20" cy="20" r="2.500" stroke="#3aa6c9" strokeWidth="1.500" />
          </svg>
        </TaskIcon>
      </div>
      <div className="ml-auto flex items-center text-[12px]">
        <svg width="16" height="16" viewBox="0 0 16 16" fill="none" stroke="#fff"><circle cx="10.500" cy="4" r="3" /><path d="M5 15c0-3 1-5 3-6.500M14 9c1 1 1.500 2.500 1.500 4" /><circle cx="5" cy="9" r="2.500" /><path d="M.5 15c0-2 2-3 4.500-3s4 1 4 3" /></svg>
        <svg width="12" height="7" viewBox="0 0 12 7" fill="none" stroke="#fff" className="ml-[21px]"><path d="M.5 6.500L6 1l5.500 5.500" /></svg>
        <svg width="18" height="12" viewBox="0 0 18 12" className="ml-[10px]"><path d="M4 4.500h13v6H4z" fill="none" stroke="#fff" /><path d="M5 5.500h8v4H5zM1 2v3M3 2v3M0 5h4v2H0zM1.500 7h1v3h2" fill="#fff" /></svg>
        <svg width="16" height="14" viewBox="0 0 16 14" fill="none" stroke="#aaa" className="ml-[9px]"><path d="M1 13A12 12 0 0 1 13 1M4 13a9 9 0 0 1 9-9M7 13a6 6 0 0 1 6-6" /><circle cx="12" cy="12" r="1.500" fill="#fff" stroke="none" /></svg>
        <svg width="15" height="14" viewBox="0 0 15 14" fill="none" stroke="#fff" className="ml-[5px]"><path d="M1 5v4h2l4 4V1L3 5zM9.500 4.500a3.500 3.500 0 0 1 0 5M11.500 2.500a6.500 6.500 0 0 1 0 9" /></svg>
        <div className="ml-[11px] text-[12px] w-[32px]">ENG</div>
        <div className="w-[60px] text-center text-[11.500px] leading-[18px]">
          <div>9:11 PM</div>
          <div>6/19/2018</div>
        </div>
        <svg width="16" height="16" viewBox="0 0 16 16" className="ml-[14px] mr-[25px]"><path d="M0 0h16v12h-4l-3 3v-3H0z" fill="#fff" /><path d="M2.500 3h11M2.500 5.500h11M2.500 8h7" stroke="#000" /></svg>
      </div>
    </div>
  );
}

export default function App() {
  return (
    <div className="w-[1366px] h-[768px] overflow-hidden flex flex-col font-['Noto_Sans',sans-serif] bg-[#e6e6e6]">
      <div className="bg-[#2b579a] h-[68px] relative shrink-0">
        <CircuitArt />
        <TitleBar />
        <TabsRow />
      </div>
      <Ribbon />
      <div className="flex-1 flex min-h-0">
        <DocumentArea />
        <SharePane />
      </div>
      <StatusBar />
      <Taskbar />
    </div>
  );
}
